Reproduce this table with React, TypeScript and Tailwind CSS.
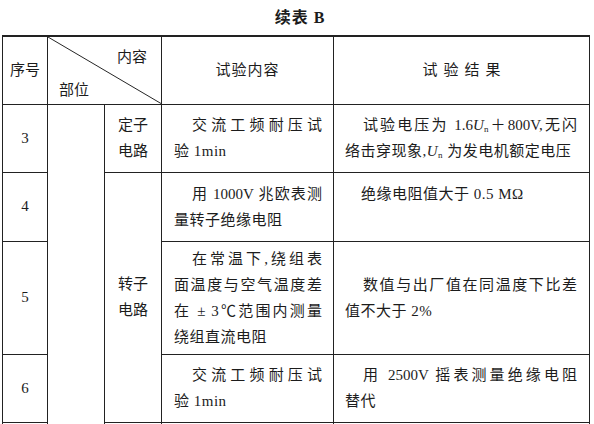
import React from "react"

const font = { fontFamily: '"Liberation Serif", "Noto Sans CJK SC", serif' }

function Un() {
  return (
    <span>
      <i>U</i>
      <sub className="text-[9px]">n</sub>
    </span>
  )
}

// full lines are spread edge to edge like the printed standard
function Lines({ lines, indent = true }: { lines: React.ReactNode[]; indent?: boolean }) {
  return (
    <div className="leading-[26px]">
      {lines.map((line, i) => (
        <div
          key={i}
          className={
            (i === 0 && indent ? "pl-[18px] " : "") +
            (i < lines.length - 1 ? "text-justify [text-align-last:justify]" : "text-left tracking-[0.5px]")
          }
        >
          {line}
        </div>
      ))}
    </div>
  )
}

export default function App() {
  const cell = "border border-[#222] align-middle p-0"
  const body = "border border-[#222] align-middle pl-[12px] pr-[11px]"
  const body2 = "border border-[#222] align-middle pl-[11px] pr-[12px]"

  return (
    <div className="w-[594px] h-[424px] overflow-hidden bg-white text-[#1c1c1c] text-[15px]" style={font}>
      <div className="h-[35px] flex items-center justify-center pl-[6px] font-bold text-[16px] tracking-[1px]">
        续表 B
      </div>
      <table className="ml-[2px] w-[587px] border-collapse table-fixed border-t-2 border-t-[#222]">
        <colgroup>
          <col className="w-[45px]" />
          <col className="w-[57px]" />
          <col className="w-[57px]" />
          <col className="w-[172px]" />
          <col className="w-[256px]" />
        </colgroup>
        <tbody>
          <tr className="h-[68px]">
            <td className={cell + " text-center"}>序号</td>
            <td colSpan={2} className={cell + " relative"}>
              <svg className="absolute inset-0 w-full h-full" viewBox="0 0 114 68" preserveAspectRatio="none">
                <line x1="0" y1="0" x2="114" y2="68" stroke="#222" strokeWidth="1" />
              </svg>
              <div className="relative h-[66px]">
                <span className="absolute left-[69px] top-[9px]">内容</span>
                <span className="absolute left-[11px] top-[42px]">部位</span>
              </div>
            </td>
            <td className={cell + " text-center tracking-[1px]"}>试验内容</td>
            <td className={cell + " text-center tracking-[6px] pl-[6px]"}>试验结果</td>
          </tr>

          <tr className="h-[68px]">
            <td className={cell + " text-center"}>3</td>
            <td rowSpan={5} className={cell}></td>
            <td className={cell + " text-center"}>
              <div className="leading-[26px]">
                <div>定子</div>
                <div>电路</div>
              </div>
            </td>
            <td className={body}>
              <Lines lines={["交流工频耐压试", "验 1min"]} />
            </td>
            <td className={body2}>
              <Lines
                lines={[
                  <>试验电压为 1.6<Un />＋800V,无闪</>,
                  <>络击穿现象,<Un /> 为发电机额定电压</>,
                ]}
              />
            </td>
          </tr>

          <tr className="h-[69px]">
            <td className={cell + " text-center"}>4</td>
            <td rowSpan={3} className={cell + " text-center"}>
              <div className="leading-[26px]">
                <div>转子</div>
                <div>电路</div>
              </div>
            </td>
            <td className={body}>
              <Lines lines={["用 1000V 兆欧表测", "量转子绝缘电阻"]} />
            </td>
            <td className={body2}>
              <div className="leading-[26px] tracking-[0.5px] pl-[16px]">
                <div>绝缘电阻值大于 0.5 MΩ</div>
                <div>&nbsp;</div>
              </div>
            </td>
          </tr>

          <tr className="h-[113px]">
            <td className={cell + " text-center"}>5</td>
            <td className={body}>
              <Lines lines={["在常温下,绕组表", "面温度与空气温度差", "在 ± 3℃范围内测量", "绕组直流电阻"]} />
            </td>
            <td className={body2}>
              <Lines lines={["数值与出厂值在同温度下比差", "值不大于 2%"]} />
            </td>
          </tr>

          <tr className="h-[68px]">
            <td className={cell + " text-center"}>6</td>
            <td className={body}>
              <Lines lines={["交流工频耐压试", "验 1min"]} />
            </td>
            <td className={body2}>
              <Lines lines={["用 2500V 摇表测量绝缘电阻", "替代"]} />
            </td>
          </tr>

          <tr className="h-[60px]">
            <td className={cell}></td>
            <td className={cell}></td>
            <td className={cell}></td>
            <td className={cell}></td>
          </tr>
        </tbody>
      </table>
    </div>
  )
}
